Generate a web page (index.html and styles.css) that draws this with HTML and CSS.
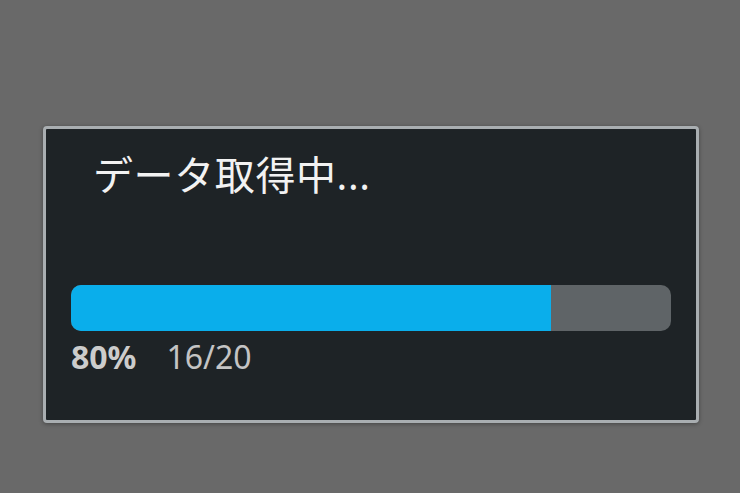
FILE: index.html
```html
<!DOCTYPE html>
<html lang="ja">
<head>
<meta charset="utf-8">
<link rel="stylesheet" href="styles.css">
</head>
<body>
<div class="dialog">
  <div class="title">データ取得中...</div>
  <div class="progress">
    <div class="fill" style="width: 80%"></div>
  </div>
  <div class="stats">
    <span class="pct">80%</span>
    <span class="count">16/20</span>
  </div>
</div>
</body>
</html>
```
FILE: styles.css
```css
html, body {
  margin: 0;
  padding: 0;
}
body {
  width: 740px;
  height: 493px;
  background: #696969;
  font-family: "Noto Sans", "Noto Sans CJK JP", sans-serif;
  padding: 126px 0 0 43px;
  box-sizing: border-box;
}
.dialog {
  width: 656px;
  height: 297px;
  box-sizing: border-box;
  background: #1e2326;
  border: 3px solid #a9aeb1;
  border-radius: 4px;
  box-shadow: 0 1px 4px rgba(0,0,0,0.35);
  padding: 22px 25px 0 25px;
}
.title {
  font-family: "Noto Sans", "Noto Sans CJK JP", sans-serif;
  font-size: 40px;
  line-height: 48px;
  color: #f2f2f2;
  padding-left: 22px;
  height: 48px;
  letter-spacing: 0.6px;
}
.progress {
  margin-top: 86px;
  height: 46px;
  background: #5f6467;
  border-radius: 10px;
  overflow: hidden;
  display: flex;
}
.fill {
  background: #0aaeeb;
  height: 100%;
}
.stats {
  margin-top: 6px;
  display: flex;
  gap: 30px;
  font-size: 32px;
  line-height: 40px;
  color: #c4c4c4;
}
.pct {
  font-weight: bold;
  color: #cccccc;
}
```
